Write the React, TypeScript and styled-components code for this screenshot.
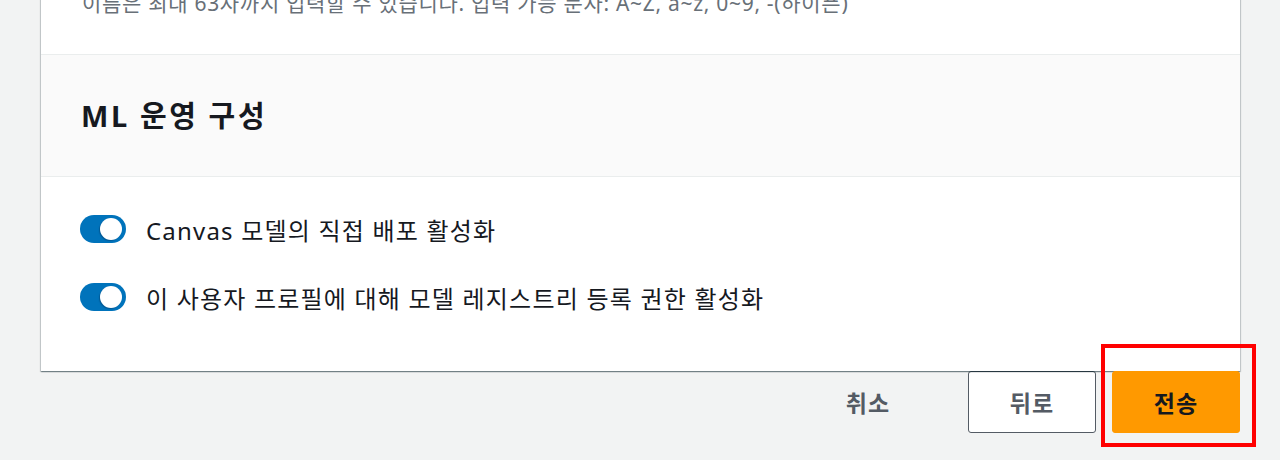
import * as React from "react";
import styled, { createGlobalStyle } from "styled-components";

// ページ全体の基本スタイル
const GlobalStyle = createGlobalStyle`
  html, body {
    margin: 0;
    padding: 0;
    background: #f2f3f3;
    font-family: "Noto Sans", "Noto Sans CJK KR", sans-serif;
    color: #16191f;
  }
`;

// スクロール位置を再現するためのラッパー
const Page = styled.div`
  padding: 0 40px 40px 41px;
  width: 1199px;
`;

const Card = styled.div`
  position: relative;
  margin-top: -12px;
  background: #ffffff;
  box-shadow: 0 1px 1px 0 rgba(0, 28, 36, 0.35),
    1px 1px 1px 0 rgba(0, 28, 36, 0.15),
    -1px 1px 1px 0 rgba(0, 28, 36, 0.15);
`;

const Hint = styled.div`
  padding: 0 40px 36px 41px;
  font-size: 21px;
  line-height: 30px;
  letter-spacing: 0.7px;
  color: #687078;
  border-bottom: 1px solid #eaeded;
`;

const SectionHeader = styled.div`
  background: #fafafa;
  padding: 42px 40px 42px 40px;
  border-bottom: 1px solid #eaeded;
`;

const Title = styled.h2`
  margin: 0;
  font-size: 29px;
  line-height: 37px;
  letter-spacing: 2.6px;
  font-weight: 700;
  color: #16191f;
`;

const Body = styled.div`
  display: flex;
  flex-direction: column;
  gap: 40px;
  padding: 38px 40px 60px 39px;
`;

const ToggleRow = styled.label`
  display: flex;
  align-items: center;
  gap: 20px;
  height: 28px;
  font-size: 24px;
  letter-spacing: 1.2px;
  color: #16191f;
`;

const Track = styled.span<{ $on: boolean }>`
  position: relative;
  display: inline-block;
  width: 46px;
  height: 28px;
  border-radius: 14px;
  background: ${(p) => (p.$on ? "#0073bb" : "#879596")};
  flex-shrink: 0;
`;

const Knob = styled.span<{ $on: boolean }>`
  position: absolute;
  top: 3px;
  left: ${(p) => (p.$on ? "20px" : "3px")};
  width: 22px;
  height: 22px;
  border-radius: 50%;
  background: #ffffff;
  box-shadow: -1px 1px 1px rgba(0, 40, 80, 0.35);
`;

const Actions = styled.div`
  display: flex;
  justify-content: flex-end;
  align-items: flex-start;
  gap: 16px;
`;

const Button = styled.button<{ $variant: "link" | "normal" | "primary" }>`
  display: block;
  height: 62px;
  min-width: 128px;
  padding: 0 20px;
  font-family: inherit;
  font-size: 23px;
  letter-spacing: 1px;
  font-weight: 700;
  border-radius: 3px;
  cursor: pointer;
  ${(p) =>
    p.$variant === "link"
      ? `background: transparent; border: none; color: #545b64; margin-right: 20px;`
      : p.$variant === "normal"
      ? `background: #ffffff; border: 1.5px solid #545b64; color: #545b64;`
      : `background: #ff9900; border: 1px solid #ff9900; color: #16191f;`}
`;

// 注釈の赤枠（ボタンを囲む）
const Highlight = styled.div`
  position: relative;
  z-index: 10;
  margin: -27px -16px -15px -11px;
  padding: 23px 12px 10px 7px;
  border: 4px solid #ff0000;
`;

const Toggle: React.FC<{ on: boolean; label: string }> = ({ on, label }) => (
  <ToggleRow>
    <Track $on={on}>
      <Knob $on={on} />
    </Track>
    {label}
  </ToggleRow>
);

export default function App() {
  return (
    <>
      <GlobalStyle />
      <Page>
        <Card>
          <Hint>
            이름은 최대 63자까지 입력할 수 있습니다. 입력 가능 문자: A~Z, a~z, 0~9, -(하이픈)
          </Hint>
          <SectionHeader>
            <Title>ML 운영 구성</Title>
          </SectionHeader>
          <Body>
            <Toggle on label="Canvas 모델의 직접 배포 활성화" />
            <Toggle on label="이 사용자 프로필에 대해 모델 레지스트리 등록 권한 활성화" />
          </Body>
        </Card>
        <Actions>
          <Button $variant="link">취소</Button>
          <Button $variant="normal">뒤로</Button>
          <Highlight>
            <Button $variant="primary">전송</Button>
          </Highlight>
        </Actions>
      </Page>
    </>
  );
}
